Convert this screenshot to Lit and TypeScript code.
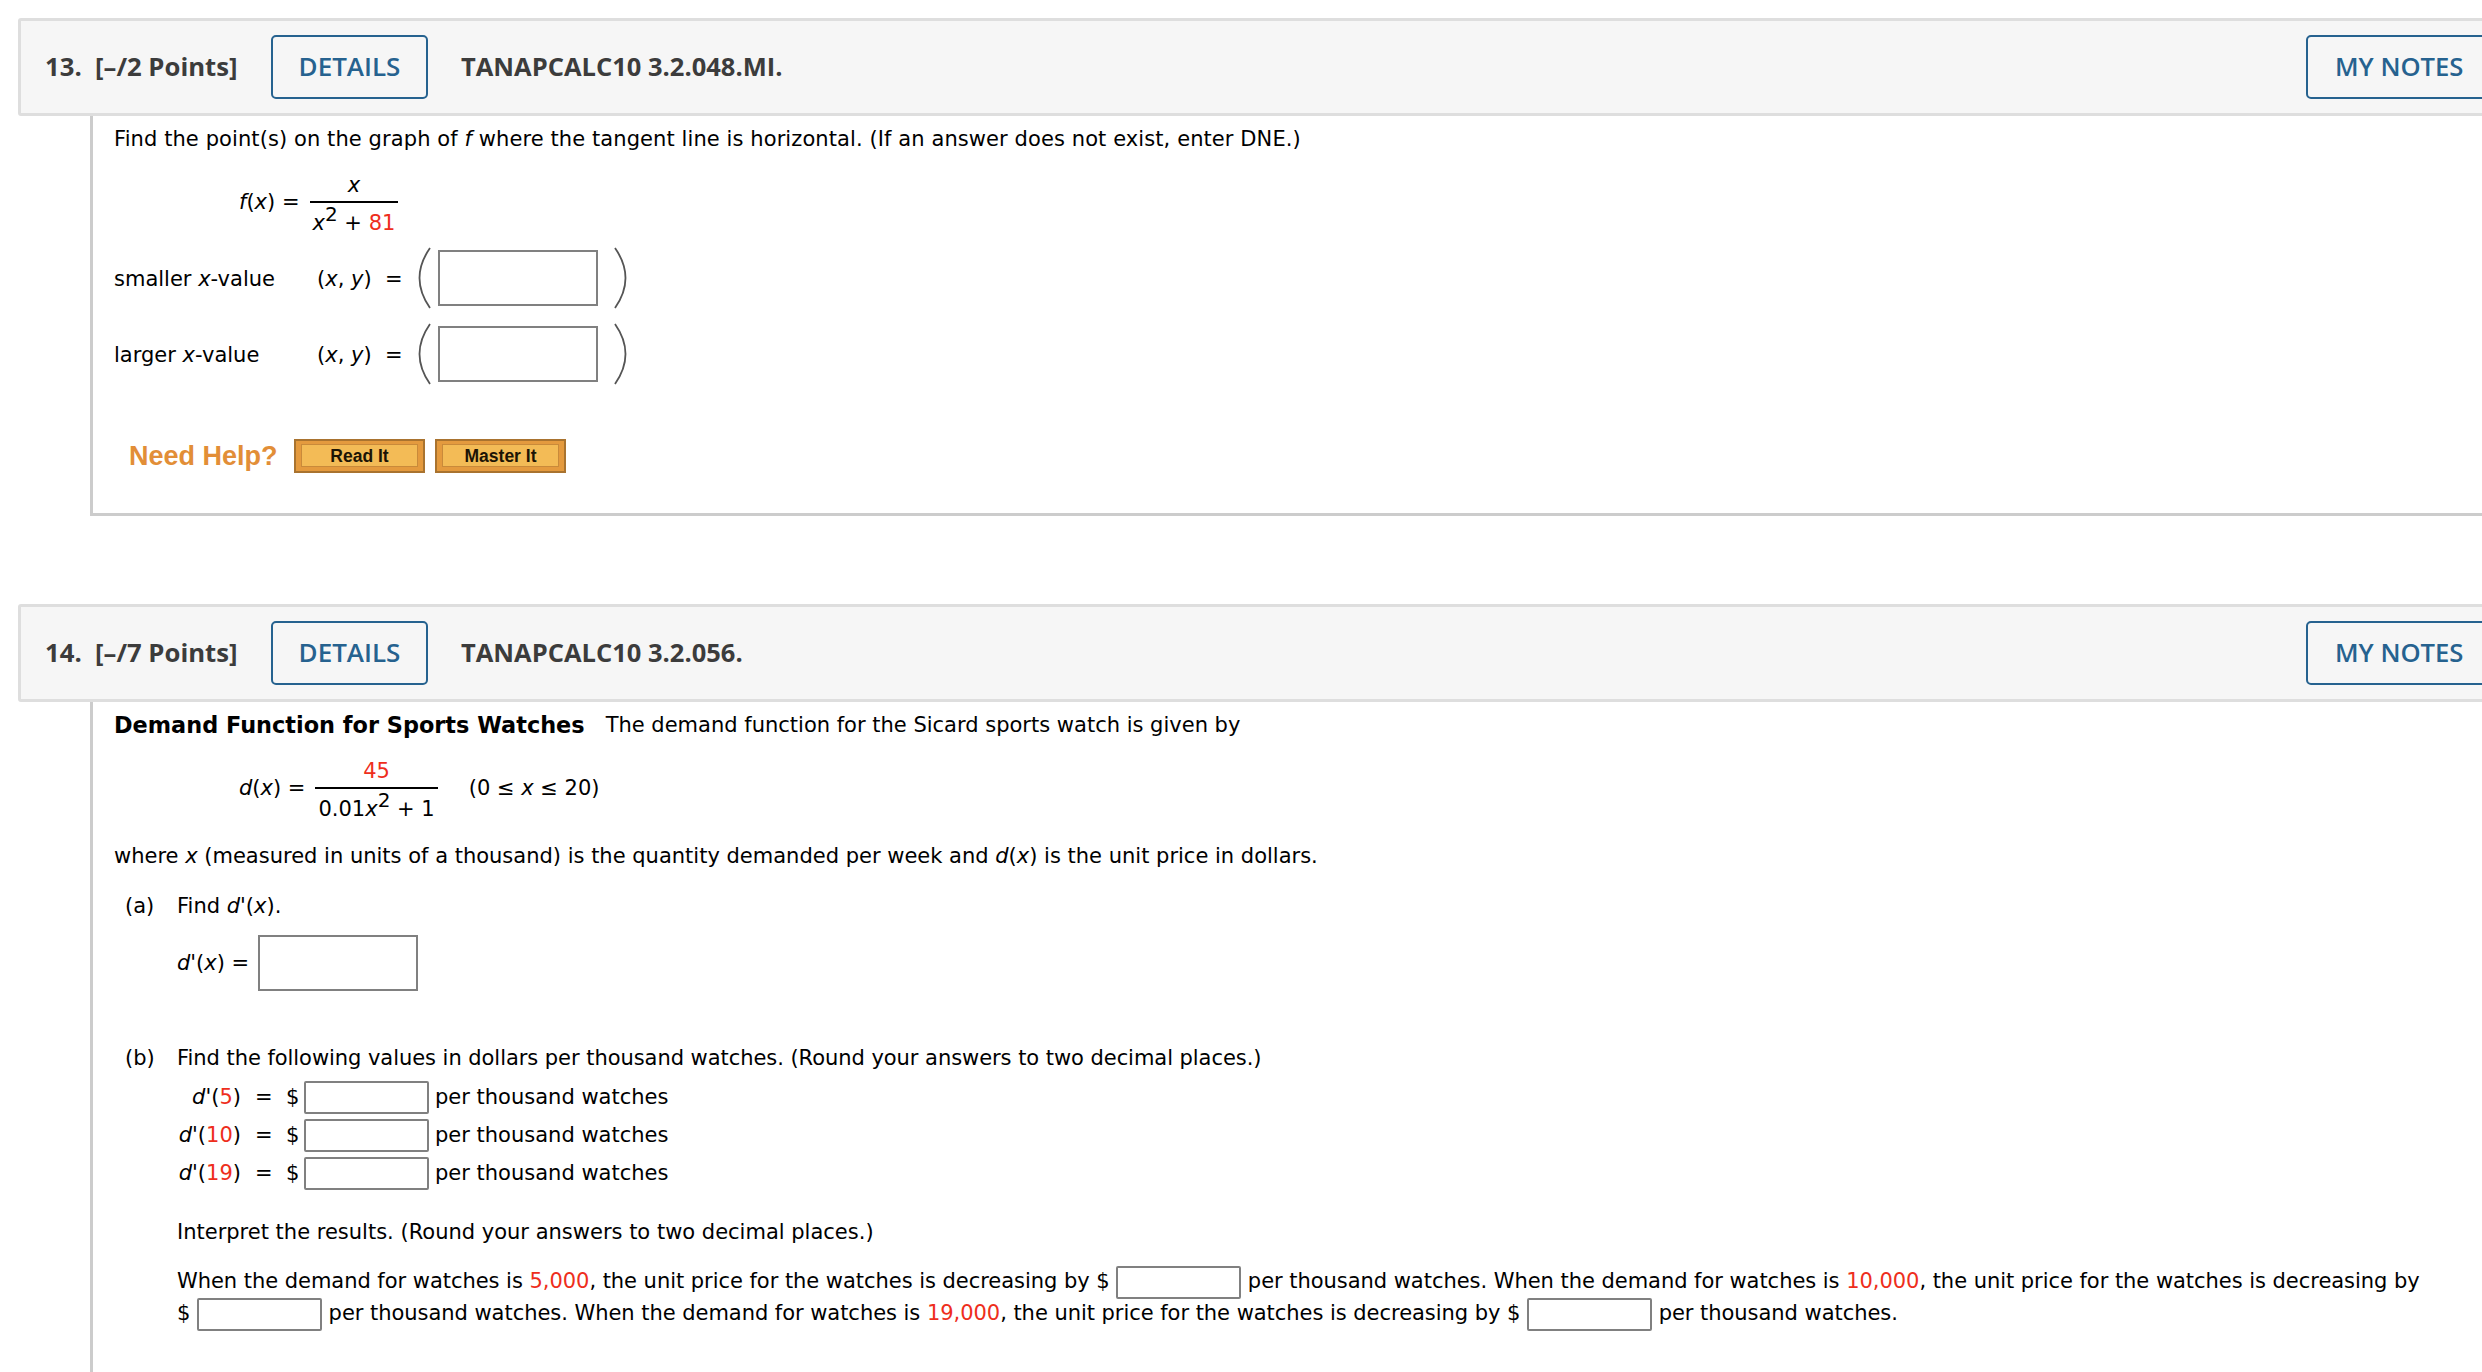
import { LitElement, html, css } from 'lit';
import { customElement } from 'lit/decorators.js';

const paren = (right = false) => html`
  <svg class="paren" width="14" height="62" viewBox="0 0 14 62">
    <path
      d=${right ? 'M2 1C9 11 12.5 21 12.5 31C12.5 41 9 51 2 61' : 'M12 1C5 11 1.5 21 1.5 31C1.5 41 5 51 12 61'}
      fill="none"
      stroke="#555"
      stroke-width="1.8"
    />
  </svg>
`;

@customElement('app-root')
export class AppRoot extends LitElement {
  static styles = css`
    :host {
      display: flex;
      flex-direction: column;
      width: 2482px;
      height: 1372px;
      overflow: hidden;
      background: #fff;
      color: #000;
      font-family: 'DejaVu Sans', Verdana, sans-serif;
      font-size: 21px;
      box-sizing: border-box;
      padding-top: 18px;
    }

    .q-head {
      display: flex;
      flex: none;
      align-items: center;
      box-sizing: border-box;
      height: 98px;
      width: 2500px;
      margin-left: 18px;
      padding-left: 24px;
      background: #f6f6f6;
      border: 3px solid #dedede;
      border-radius: 3px;
      font-family: 'Open Sans', sans-serif;
      font-weight: 700;
      font-size: 25.5px;
      color: #3c3c3c;
    }

    .q-head > span {
      padding-bottom: 2px;
    }

    .points {
      width: 226px;
      font-size: 25.7px;
      white-space: pre;
    }

    .btn {
      box-sizing: border-box;
      display: flex;
      align-items: center;
      justify-content: center;
      height: 64px;
      border: 2px solid #26628f;
      border-radius: 5px;
      color: #26628f;
      font-weight: 600;
      font-size: 26px;
    }

    .details {
      width: 157px;
      margin-right: 33px;
    }

    .notes {
      width: 189px;
      margin-left: auto;
      margin-right: 20px;
      justify-content: flex-start;
      padding-left: 27px;
      font-size: 25.6px;
    }

    .q-body {
      margin-left: 90px;
      padding-left: 21px;
      border-left: 3px solid #ccc;
    }

    .q-body.closed {
      border-bottom: 3px solid #ccc;
      padding-bottom: 40px;
      margin-bottom: 88px;
    }

    .q-body.open {
      flex: 1;
    }

    .line {
      display: flex;
      align-items: center;
      white-space: pre;
    }

    .wide {
      letter-spacing: 0.09px;
    }

    .tight {
      letter-spacing: -0.05px;
    }

    .red {
      color: #ee2e1c;
    }

    i {
      font-style: italic;
    }

    b {
      font-weight: 700;
      font-size: 22.4px;
      margin-right: 1px;
    }

    .formula {
      display: flex;
      align-items: center;
      padding-left: 125px;
      white-space: pre;
    }

    .lhs {
      padding-top: 2px;
    }

    .frac {
      display: inline-flex;
      flex-direction: column;
      align-items: center;
      margin-left: 10px;
      padding-top: 2px;
    }

    .frac > div {
      line-height: 40px;
      height: 36px;
      white-space: pre;
      padding: 0 3px;
    }

    .frac .top {
      border-bottom: 2px solid #000;
      align-self: stretch;
      text-align: center;
    }

    sup {
      font-size: 20px;
      line-height: 0;
      vertical-align: 9px;
    }

    .box {
      box-sizing: border-box;
      display: inline-block;
      flex: none;
      background: #fff;
      border: 2px solid #808080;
    }

    .box.big {
      width: 160px;
      height: 56px;
    }

    .box.small {
      width: 125px;
      height: 33px;
      border-radius: 2px;
    }

    .point-row {
      height: 56px;
    }

    .point-row .label {
      width: 203px;
      padding-top: 2px;
    }

    .point-row .pair {
      width: 101px;
      padding-top: 2px;
    }

    .paren {
      flex: none;
    }

    .point-row .box {
      margin: 0 15px 0 6px;
    }

    .help {
      display: flex;
      align-items: center;
      margin-top: 57px;
      padding-left: 15px;
      height: 34px;
    }

    .help-label {
      font-family: 'Liberation Sans', sans-serif;
      font-weight: 700;
      font-size: 27px;
      color: #e28e37;
      width: 165px;
    }

    .orange {
      box-sizing: border-box;
      display: flex;
      width: 131px;
      height: 34px;
      margin-right: 10px;
      background: #e49a3e;
      border: 2px solid #a9732f;
    }

    .orange span {
      flex: 1;
      display: flex;
      align-items: center;
      justify-content: center;
      margin: 3px 5px 4px;
      padding-top: 2px;
      background: #f3bb56;
      border: 1px solid #c98a3a;
      font-family: 'Liberation Sans', sans-serif;
      font-weight: 700;
      font-size: 17.5px;
      color: #1c1405;
    }

    .part {
      padding-left: 11px;
    }

    .part .tag {
      display: inline-block;
      width: 52px;
    }

    .indent {
      padding-left: 63px;
    }

    .value-row {
      display: flex;
      align-items: center;
      height: 38px;
      white-space: pre;
    }

    .value-row .name {
      width: 64px;
      text-align: right;
      margin-right: 14px;
    }

    .value-row .dollar {
      width: 49px;
    }

    .value-row .box {
      margin-right: 6px;
    }

    .para-line {
      height: 32px;
      line-height: 32px;
      white-space: nowrap;
      letter-spacing: -0.04px;
    }

    .para-line .box {
      vertical-align: -7px;
      margin: -4px 0;
    }
  `;

  render() {
    return html`
      <div class="q-head">
        <span class="points">13.  [–/2 Points]</span>
        <span class="btn details">DETAILS</span>
        <span>TANAPCALC10 3.2.048.MI.</span>
        <span class="btn notes">MY NOTES</span>
      </div>
      <div class="q-body closed">
        <div class="line wide" style="height:45px">Find the point(s) on the graph of <i>f</i> where the tangent line is horizontal. (If an answer does not exist, enter DNE.)</div>
        <div class="formula" style="height:80px">
          <span class="lhs"><i>f</i>(<i>x</i>) =</span>
          <span class="frac">
            <div class="top"><i>x</i></div>
            <div><i>x</i><sup>2</sup> + <span class="red">81</span></div>
          </span>
        </div>
        <div class="line point-row" style="margin-top:9px">
          <span class="label">smaller <i>x</i>-value</span>
          <span class="pair">(<i>x</i>, <i>y</i>)  =</span>
          ${paren()}<span class="box big"></span>${paren(true)}
        </div>
        <div class="line point-row" style="margin-top:20px">
          <span class="label">larger <i>x</i>-value</span>
          <span class="pair">(<i>x</i>, <i>y</i>)  =</span>
          ${paren()}<span class="box big"></span>${paren(true)}
        </div>
        <div class="help">
          <span class="help-label">Need Help?</span>
          <span class="orange"><span>Read It</span></span>
          <span class="orange"><span>Master It</span></span>
        </div>
      </div>

      <div class="q-head">
        <span class="points">14.  [–/7 Points]</span>
        <span class="btn details">DETAILS</span>
        <span>TANAPCALC10 3.2.056.</span>
        <span class="btn notes">MY NOTES</span>
      </div>
      <div class="q-body open">
        <div class="line" style="height:45px"><b>Demand Function for Sports Watches</b>   The demand function for the Sicard sports watch is given by</div>
        <div class="formula" style="height:80px">
          <span class="lhs"><i>d</i>(<i>x</i>) =</span>
          <span class="frac">
            <div class="top red">45</div>
            <div>0.01<i>x</i><sup>2</sup> + 1</div>
          </span>
          <span class="lhs" style="margin-left:31px">(0 ≤ <i>x</i> ≤ 20)</span>
        </div>
        <div class="line" style="height:48px;margin-top:5px"><span>where <i>x</i> (measured in units of a thousand) is the quantity demanded per week and <i>d</i>(<i>x</i>) is the unit price in dollars.</span></div>
        <div class="line part" style="height:40px;margin-top:6px"><span class="tag">(a)</span>Find <i>d'</i>(<i>x</i>).</div>
        <div class="line indent" style="margin-top:9px">
          <span><i>d'</i>(<i>x</i>) =</span>
          <span class="box big" style="margin-left:9px"></span>
        </div>
        <div class="line part tight" style="height:40px;margin-top:47px"><span class="tag">(b)</span>Find the following values in dollars per thousand watches. (Round your answers to two decimal places.)</div>
        <div class="indent">
          ${['5', '10', '19'].map(
            (v) => html`<div class="value-row">
              <span class="name"><i>d'</i>(<span class="red">${v}</span>)</span>
              <span class="dollar">=  $</span>
              <span class="box small"></span>
              <span>per thousand watches</span>
            </div>`
          )}
          <div class="line" style="height:40px;margin-top:20px">Interpret the results. (Round your answers to two decimal places.)</div>
          <div style="margin-top:13px">
            <div class="para-line">When the demand for watches is <span class="red">5,000</span>, the unit price for the watches is decreasing by $ <span class="box small"></span> per thousand watches. When the demand for watches is <span class="red">10,000</span>, the unit price for the watches is decreasing by</div>
            <div class="para-line">$ <span class="box small"></span> per thousand watches. When the demand for watches is <span class="red">19,000</span>, the unit price for the watches is decreasing by $ <span class="box small"></span> per thousand watches.</div>
          </div>
        </div>
      </div>
    `;
  }
}
